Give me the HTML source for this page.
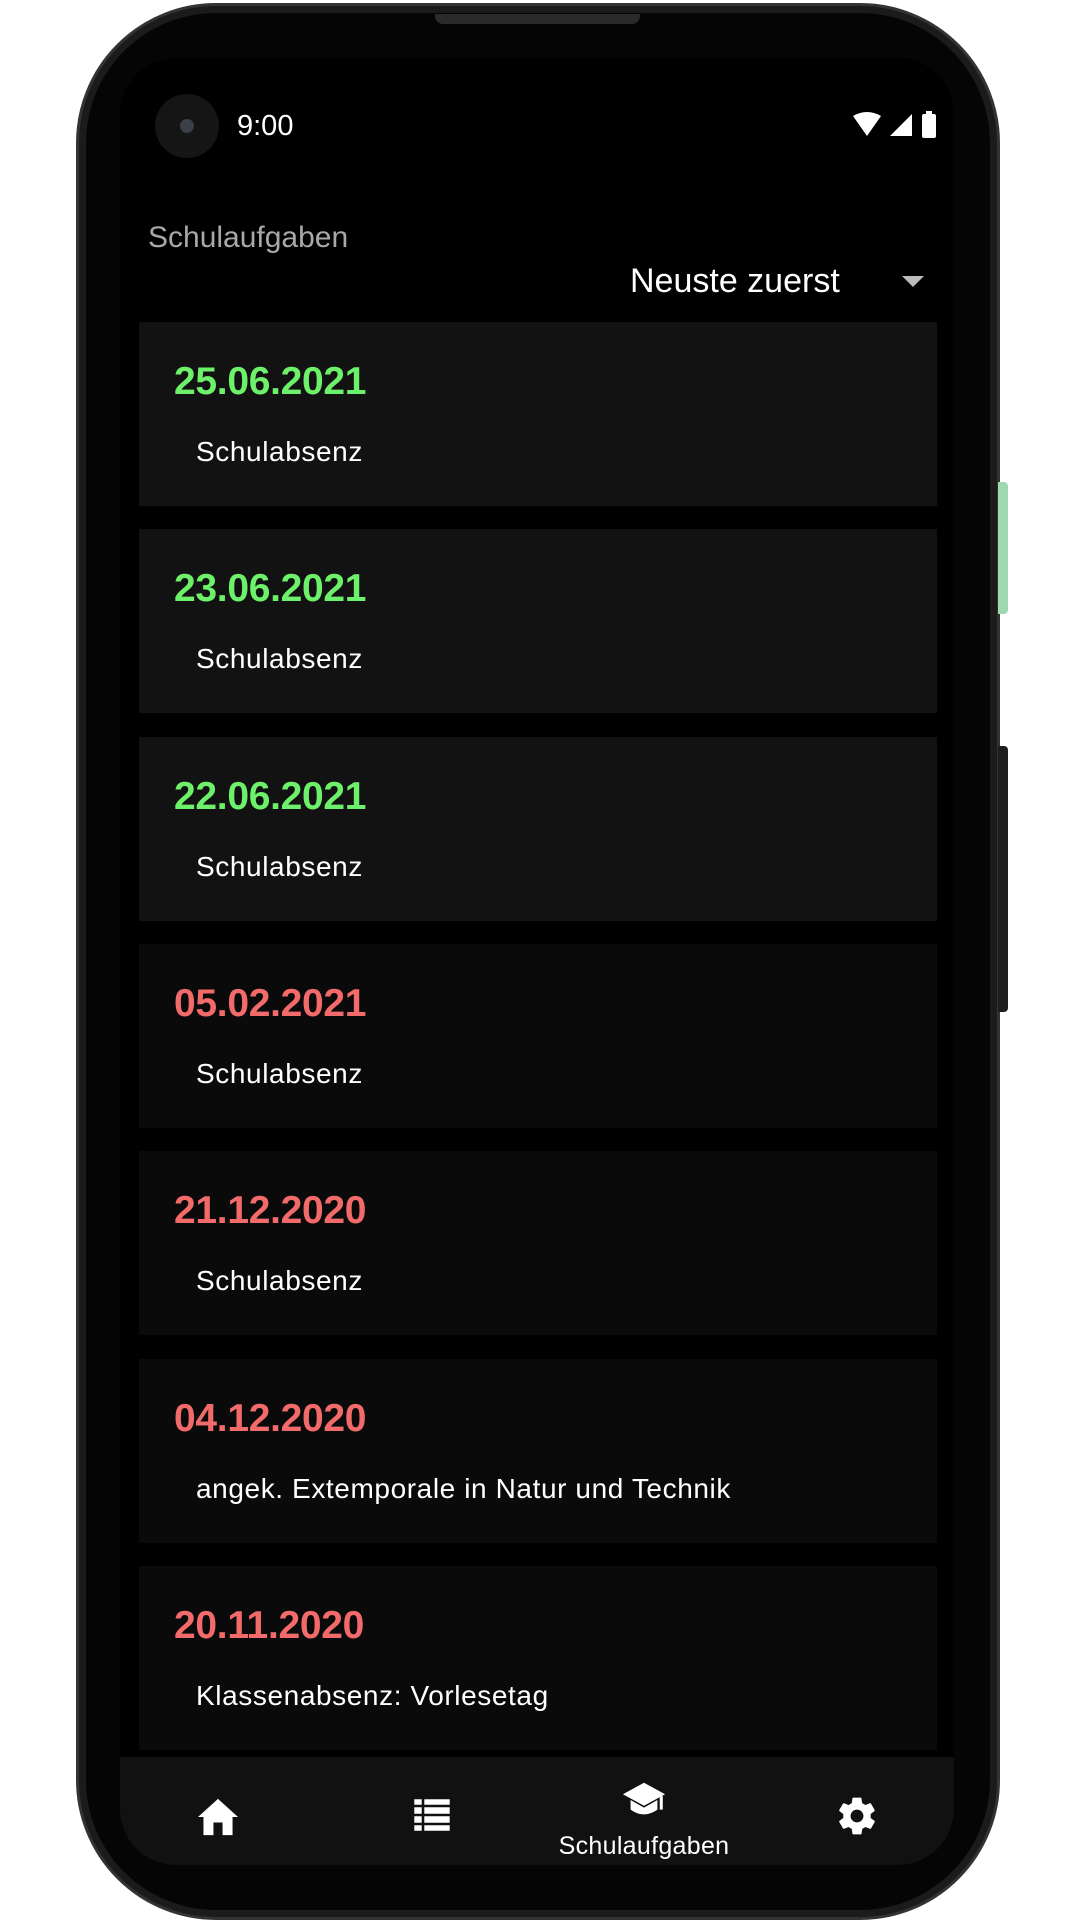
<!DOCTYPE html>
<html><head><meta charset="utf-8"><style>
*{margin:0;padding:0;box-sizing:border-box}
html,body{width:1080px;height:1920px;background:#fff;overflow:hidden;font-family:"Liberation Sans",sans-serif}
.phone{position:absolute;left:76px;top:3px;width:924px;height:1917px;background:#1b1b1b;border-radius:140px;border:3px solid #333}
.bezel{position:absolute;left:86px;top:13px;width:904px;height:1897px;background:#050505;border-radius:130px}
.screen{position:absolute;left:120px;top:58px;width:834px;height:1807px;background:#000;border-radius:56px;overflow:hidden}
.spk{position:absolute;left:435px;top:14px;width:205px;height:10px;background:#2a2a2a;border-radius:0 0 8px 8px}
.btn{position:absolute;left:998px;width:10px;border-radius:0 4px 4px 0}
.card{position:absolute;left:19px;width:798px;height:184px}
.d{position:absolute;left:35px;top:38px;font-size:39px;font-weight:bold;letter-spacing:-0.3px}
.s{position:absolute;left:57px;top:114px;font-size:28px;color:#fff;letter-spacing:0.6px}
.g{color:#6df06a}.r{color:#f26a69}
</style></head><body>
<div class="phone"></div>
<div class="bezel"></div>
<div class="spk"></div>
<div class="btn" style="top:482px;height:132px;background:#9fd8b0"></div>
<div class="btn" style="top:746px;height:266px;background:#1e1e1e"></div>
<div class="screen">
 <div style="position:absolute;left:35px;top:36px;width:64px;height:64px;border-radius:50%;background:#151515"></div>
 <div style="position:absolute;left:60px;top:61px;width:14px;height:14px;border-radius:50%;background:#3a3f48"></div>
 <div style="position:absolute;left:117px;top:52px;font-size:29px;color:#fff">9:00</div>
 <svg style="position:absolute;left:730px;top:52px" width="100" height="34" viewBox="0 0 100 34">
  <path d="M3 6 Q17 -2 31 6 L17 26 Z" fill="#fff"/>
  <path d="M40 26 L62 4 L62 26 Z" fill="#fff"/>
  <rect x="72" y="4" width="14" height="24" rx="2" fill="#fff"/><rect x="76" y="1" width="6" height="4" fill="#fff"/>
 </svg>
 <div style="position:absolute;left:28px;top:163px;font-size:30px;color:#a8a8a8">Schulaufgaben</div>
 <div style="position:absolute;left:510px;top:204px;font-size:34px;color:#fff">Neuste zuerst</div>
 <svg style="position:absolute;left:782px;top:218px" width="22" height="12"><path d="M0 0H22L11 11Z" fill="#bbb"/></svg>

 <div class="card" style="top:264px;background:#121212"><div class="d g">25.06.2021</div><div class="s">Schulabsenz</div></div>
 <div class="card" style="top:471px;background:#121212"><div class="d g">23.06.2021</div><div class="s">Schulabsenz</div></div>
 <div class="card" style="top:679px;background:#121212"><div class="d g">22.06.2021</div><div class="s">Schulabsenz</div></div>
 <div class="card" style="top:886px;background:#0a0a0a"><div class="d r">05.02.2021</div><div class="s">Schulabsenz</div></div>
 <div class="card" style="top:1093px;background:#0a0a0a"><div class="d r">21.12.2020</div><div class="s">Schulabsenz</div></div>
 <div class="card" style="top:1301px;background:#0a0a0a"><div class="d r">04.12.2020</div><div class="s">angek. Extemporale in Natur und Technik</div></div>
 <div class="card" style="top:1508px;background:#0a0a0a"><div class="d r">20.11.2020</div><div class="s">Klassenabsenz: Vorlesetag</div></div>

 <div style="position:absolute;left:0;top:1699px;width:834px;height:108px;background:#111"></div>
 <svg style="position:absolute;left:76px;top:1739px" width="44" height="40" viewBox="0 0 24 22"><path d="M12 1 L23 11 H20 V21 H14.5 V14 H9.5 V21 H4 V11 H1 Z" fill="#fff"/></svg>
 <svg style="position:absolute;left:293px;top:1740px" width="38" height="34" viewBox="0 0 19 17"><path d="M0 0H19V17H0Z M5 0V17 M5 4H19 M5 8.5H19 M5 13H19 M0 4H5 M0 8.5H5 M0 13H5" fill="#fff" stroke="#111" stroke-width="1.3"/></svg>
 <svg style="position:absolute;left:501px;top:1722px" width="46" height="40" viewBox="0 0 24 20"><path d="M12 1 L23 7 L12 13 L1 7 Z" fill="#fff"/><path d="M5 10 V15 Q12 20 19 15 V10 L12 14 Z" fill="#fff"/><path d="M21 8 V15" stroke="#fff" stroke-width="1.6"/></svg>
 <div style="position:absolute;left:404px;top:1774px;width:240px;text-align:center;font-size:25px;color:#fff;letter-spacing:0.3px">Schulaufgaben</div>
 <svg style="position:absolute;left:715px;top:1736px" width="44" height="44" viewBox="0 0 24 24"><path fill="#fff" d="M19.4 13c.04-.33.06-.66.06-1s-.02-.67-.06-1l2.1-1.65c.2-.15.24-.42.12-.64l-2-3.460c-.12-.22-.39-.3-.61-.22l-2.490 1c-.52-.4-1.080-.73-1.690-.98l-.38-2.650A.49.49 0 0 0 14 2h-4c-.25 0-.46.18-.49.42l-.38 2.650c-.61.25-1.170.59-1.690.98l-2.490-1c-.23-.09-.49 0-.61.22l-2 3.460c-.13.22-.07.49.12.64L4.570 11c-.04.33-.07.67-.07 1s.03.67.07 1l-2.110 1.650c-.19.15-.24.42-.12.64l2 3.460c.12.22.39.3.61.22l2.490-1c.52.4 1.080.73 1.690.98l.38 2.650c.03.24.24.42.49.42h4c.25 0 .46-.18.49-.42l.38-2.650c.61-.25 1.170-.59 1.690-.98l2.490 1c.23.09.49 0 .61-.22l2-3.460c.12-.22.07-.49-.12-.64L19.4 13zM12 15.5A3.5 3.5 0 1 1 12 8.5a3.5 3.5 0 0 1 0 7z"/></svg>
</div>
</body></html>
